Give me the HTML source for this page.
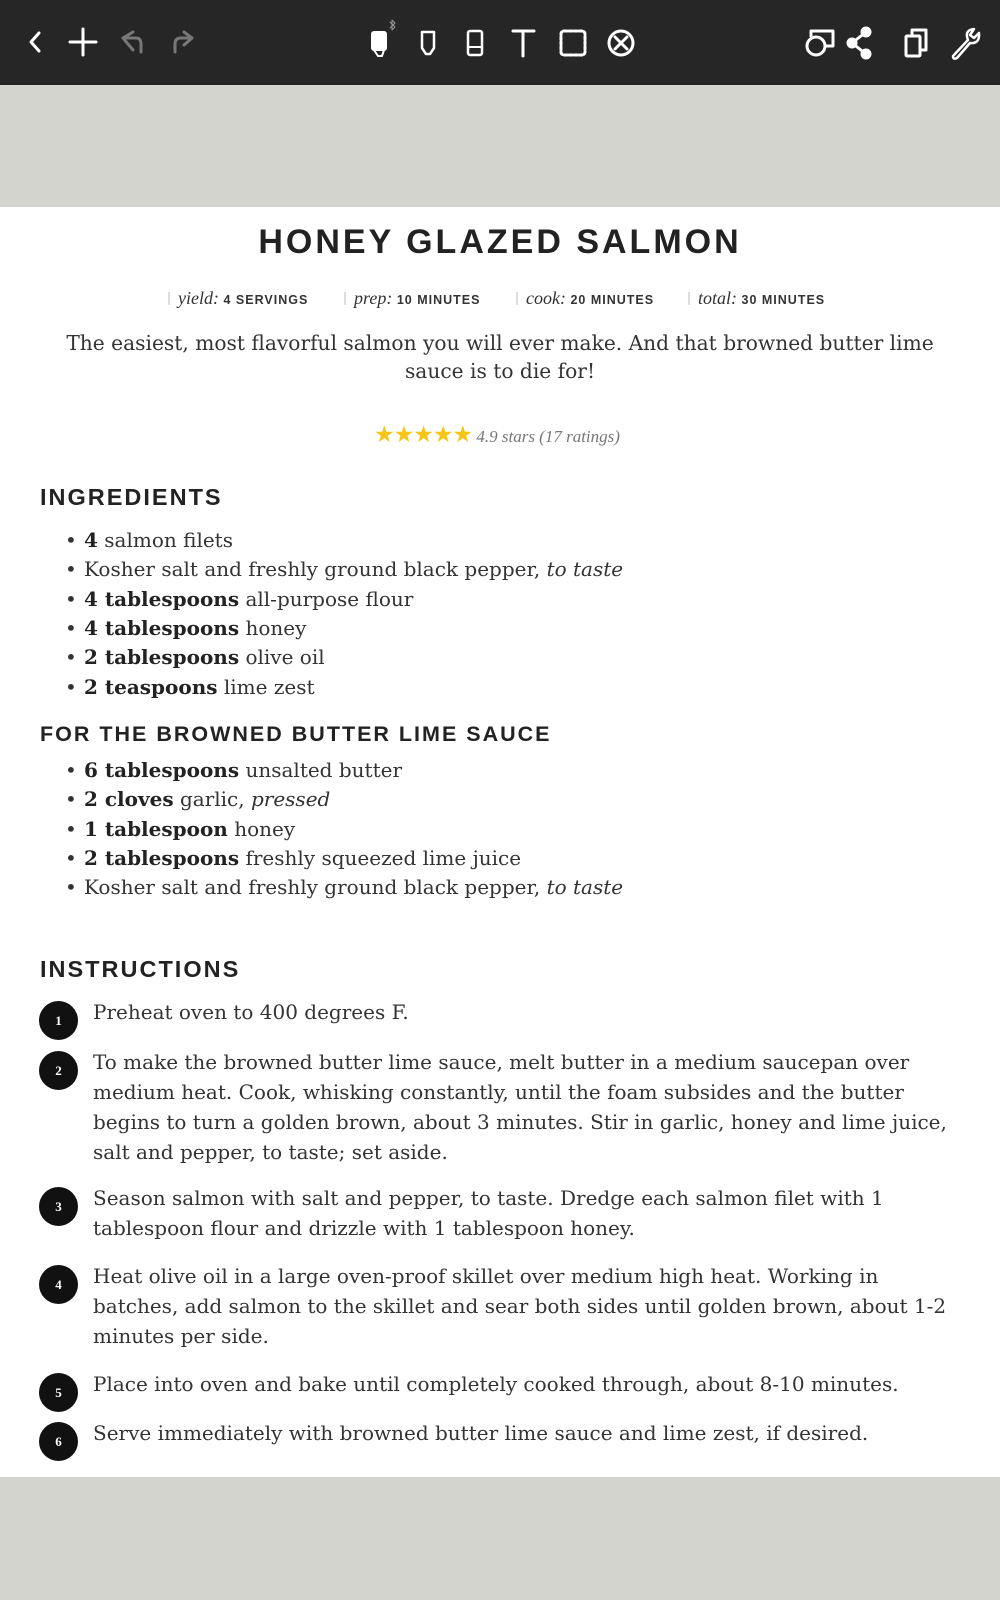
<!DOCTYPE html>
<html><head><meta charset="utf-8"><style>
*{margin:0;padding:0;box-sizing:border-box}
body{width:1000px;height:1600px;background:#d4d4cf;position:relative;overflow:hidden;font-family:"DejaVu Serif","Liberation Serif",serif;color:#333}
.bar{position:absolute;left:0;top:0;width:1000px;height:85px;background:#262626}
.page{position:absolute;left:0;top:207px;width:1000px;height:1270px;background:#fff}
.a{position:absolute;white-space:nowrap;line-height:30px;font-size:20px}
.h{font-family:"Liberation Sans",sans-serif;font-weight:bold;letter-spacing:2px;color:#222;font-size:23.5px}
.li{left:65px}
.li:before{content:"•";position:absolute;left:0}
.li span.t{margin-left:19px}
b{color:#222}
.num{position:absolute;left:39px;width:39px;height:39px;border-radius:50%;background:#111;color:#fff;font-family:"Liberation Serif",serif;font-weight:bold;font-size:13px;text-align:center;line-height:39px}
.st{left:93px}
.meta{position:absolute;top:288px;font-size:18px;font-style:italic;white-space:nowrap;color:#333;font-family:"Liberation Serif",serif}
.meta span{font-style:normal;font-family:"Liberation Sans",sans-serif;font-weight:bold;font-size:12.5px;letter-spacing:1px;color:#333}
.meta i{display:inline-block;width:2px;height:13px;background:#ddd;margin-right:8px;vertical-align:-1px}
</style></head><body>
<div class="bar">
<svg width="1000" height="85" fill="none" stroke="#fff" stroke-width="3" stroke-linecap="round" stroke-linejoin="round">
<path d="M39 33 L31 42 L39 51"/>
<path d="M83 29 V55 M70 42 H96"/>
<g stroke="#777"><path d="M133 50 L123 38 L133 32 M123 38 H136 Q141 38 141 44 V52"/>
<path d="M175 52 V44 Q175 38 181 38 H192 M184 32 L192 38 L184 45"/></g>
<rect x="372" y="32" width="14" height="18" rx="2" fill="#fff" stroke-width="2"/><path d="M374 50 L378 56 H382 L384 50" stroke-width="2"/>
<path d="M390 22 l5 5 -3 3 v-10 l3 3 -5 5" stroke="#999" stroke-width="1"/>
<path d="M422 32 H434 V48 L430 54 H426 L422 48 Z" stroke-width="2.5"/>
<rect x="468" y="31" width="14" height="24" rx="2" stroke-width="2.5"/><path d="M468 47 H482" stroke-width="2"/>
<path d="M513 31 H534 M523 31 V56"/>
<rect x="561" y="31" width="24" height="24" rx="3" stroke-dasharray="3 2"/>
<circle cx="621" cy="43" r="12"/><path d="M615 37 L627 49 M627 37 L615 49"/>
<circle cx="816" cy="46" r="9"/><path d="M811 36 V31 H833 V46 H826"/>
<circle cx="866" cy="32" r="4" fill="#fff"/><circle cx="866" cy="54" r="4" fill="#fff"/><circle cx="852" cy="43" r="4" fill="#fff"/><path d="M866 32 L852 43 L866 54"/>
<rect x="906" y="36" width="14" height="20" rx="1"/><path d="M912 36 V30 H926 V50 H920"/>
<path d="M953 56 L968 40 Q964 30 974 29 L970 35 L974 38 L979 33 Q980 44 970 43 L957 58 Q953 60 953 56Z" stroke-width="2.5"/>
</svg>
</div>
<div class="page"></div>
<div class="a" style="left:0;width:1000px;text-align:center;top:222px;line-height:40px;font-family:'Liberation Sans',sans-serif;font-weight:bold;font-size:34px;letter-spacing:3px;color:#222">HONEY GLAZED SALMON</div>
<div class="meta" style="left:168px"><i></i>yield: <span>4 SERVINGS</span></div>
<div class="meta" style="left:344px"><i></i>prep: <span>10 MINUTES</span></div>
<div class="meta" style="left:516px"><i></i>cook: <span>20 MINUTES</span></div>
<div class="meta" style="left:688px"><i></i>total: <span>30 MINUTES</span></div>
<div class="a" style="left:0;width:1000px;text-align:center;top:328px;font-size:20.2px">The easiest, most flavorful salmon you will ever make. And that browned butter lime</div>
<div class="a" style="left:0;width:1000px;text-align:center;top:356px;font-size:20.2px">sauce is to die for!</div>
<div class="a" style="left:374px;top:420px;font-size:17px;color:#777;font-style:italic;font-family:'Liberation Serif',serif"><span style="color:#f5c518;font-style:normal;font-size:23px;letter-spacing:-1px">★★★★★</span> 4.9 stars (17 ratings)</div>
<div class="a h" style="left:40px;top:482px">INGREDIENTS</div>
<div class="a li" style="top:525px"><span class="t"><b>4</b> salmon filets</span></div>
<div class="a li" style="top:554px"><span class="t">Kosher salt and freshly ground black pepper, <i>to taste</i></span></div>
<div class="a li" style="top:584px"><span class="t"><b>4 tablespoons</b> all-purpose flour</span></div>
<div class="a li" style="top:613px"><span class="t"><b>4 tablespoons</b> honey</span></div>
<div class="a li" style="top:642px"><span class="t"><b>2 tablespoons</b> olive oil</span></div>
<div class="a li" style="top:672px"><span class="t"><b>2 teaspoons</b> lime zest</span></div>
<div class="a h" style="left:40px;top:719px;font-size:21.5px">FOR THE BROWNED BUTTER LIME SAUCE</div>
<div class="a li" style="top:755px"><span class="t"><b>6 tablespoons</b> unsalted butter</span></div>
<div class="a li" style="top:784px"><span class="t"><b>2 cloves</b> garlic, <i>pressed</i></span></div>
<div class="a li" style="top:814px"><span class="t"><b>1 tablespoon</b> honey</span></div>
<div class="a li" style="top:843px"><span class="t"><b>2 tablespoons</b> freshly squeezed lime juice</span></div>
<div class="a li" style="top:872px"><span class="t">Kosher salt and freshly ground black pepper, <i>to taste</i></span></div>
<div class="a h" style="left:40px;top:954px">INSTRUCTIONS</div>
<div class="num" style="top:1001px">1</div>
<div class="a st" style="top:997px">Preheat oven to 400 degrees F.</div>
<div class="num" style="top:1051px">2</div>
<div class="a st" style="top:1047px">To make the browned butter lime sauce, melt butter in a medium saucepan over<br>medium heat. Cook, whisking constantly, until the foam subsides and the butter<br>begins to turn a golden brown, about 3 minutes. Stir in garlic, honey and lime juice,<br>salt and pepper, to taste; set aside.</div>
<div class="num" style="top:1187px">3</div>
<div class="a st" style="top:1183px">Season salmon with salt and pepper, to taste. Dredge each salmon filet with 1<br>tablespoon flour and drizzle with 1 tablespoon honey.</div>
<div class="num" style="top:1265px">4</div>
<div class="a st" style="top:1261px">Heat olive oil in a large oven-proof skillet over medium high heat. Working in<br>batches, add salmon to the skillet and sear both sides until golden brown, about 1-2<br>minutes per side.</div>
<div class="num" style="top:1373px">5</div>
<div class="a st" style="top:1369px">Place into oven and bake until completely cooked through, about 8-10 minutes.</div>
<div class="num" style="top:1422px">6</div>
<div class="a st" style="top:1418px">Serve immediately with browned butter lime sauce and lime zest, if desired.</div>
</body></html>
